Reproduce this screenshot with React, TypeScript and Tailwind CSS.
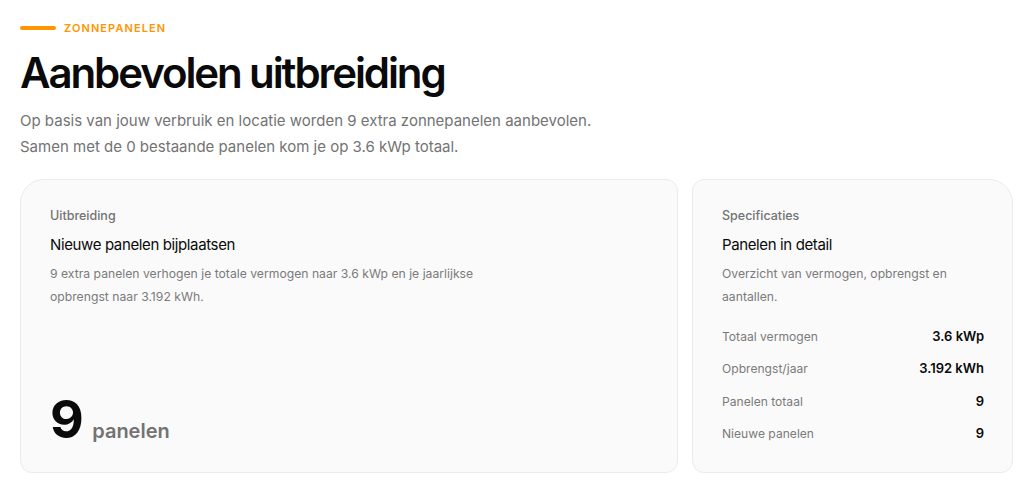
import React from "react";

const rows = [
  ["Totaal vermogen", "3.6 kWp"],
  ["Opbrengst/jaar", "3.192 kWh"],
  ["Panelen totaal", "9"],
  ["Nieuwe panelen", "9"],
];

export default function App() {
  return (
    <div className="min-h-[481px] w-[1030px] bg-white pl-5 pt-[20px] text-[#111] [font-family:Inter,'Noto_Sans',sans-serif]">
      <div className="flex items-center gap-2">
        <div className="h-1 w-9 rounded-full bg-[#ff9500]" />
        <span className="text-[11px] font-semibold uppercase tracking-[0.1em] text-[#ff9500]">Zonnepanelen</span>
      </div>
      <h1 className="mt-[10px] text-[42px] font-semibold leading-[52px] tracking-[-0.05em] text-[#0a0a0a]">Aanbevolen uitbreiding</h1>
      <p className="mt-[9px] text-[15px] leading-[26px] text-[#737373]">
        Op basis van jouw verbruik en locatie worden 9 extra zonnepanelen aanbevolen.
        <br />
        Samen met de 0 bestaande panelen kom je op 3.6 kWp totaal.
      </p>
      <div className="mt-[19px] grid grid-cols-[658px_321px] gap-[14px]">
        <div className="flex h-[294px] flex-col rounded-xl rounded-tl-[24px] border border-[#ebebeb] bg-[#fafafa] px-[29px] pt-[27px] pb-[26px]">
          <div className="text-[12.5px] font-medium text-[#737373]">Uitbreiding</div>
          <div className="mt-[9px] text-[15px] tracking-[-0.025em] text-[#0a0a0a]">Nieuwe panelen bijplaatsen</div>
          <p className="mt-[5px] w-[460px] text-[12.2px] leading-[23px] text-[#7a7a7a]">
            9 extra panelen verhogen je totale vermogen naar 3.6 kWp en je jaarlijkse opbrengst naar 3.192 kWh.
          </p>
          <div className="mt-auto flex items-baseline gap-[10px]">
            <span className="text-[52px] font-bold leading-[52px] tracking-[-0.03em] text-[#0a0a0a]">9</span>
            <span className="text-[20px] font-semibold text-[#737373]">panelen</span>
          </div>
        </div>
        <div className="flex h-[294px] flex-col rounded-xl rounded-tr-[24px] border border-[#ebebeb] bg-[#fafafa] pl-[29px] pr-[28px] pt-[27px]">
          <div className="text-[12.5px] font-medium text-[#737373]">Specificaties</div>
          <div className="mt-[9px] text-[15px] tracking-[-0.025em] text-[#0a0a0a]">Panelen in detail</div>
          <p className="mt-[5px] text-[12.2px] leading-[23px] text-[#7a7a7a]">
            Overzicht van vermogen, opbrengst en aantallen.
          </p>
          <div className="mt-[19px] flex flex-col gap-[13px]">
            {rows.map(([k, v]) => (
              <div key={k} className="flex items-center justify-between leading-[19.5px]">
                <span className="text-[12.1px] text-[#7a7a7a]">{k}</span>
                <span className="text-[13px] font-semibold text-[#0a0a0a]">{v}</span>
              </div>
            ))}
          </div>
        </div>
      </div>
    </div>
  );
}
